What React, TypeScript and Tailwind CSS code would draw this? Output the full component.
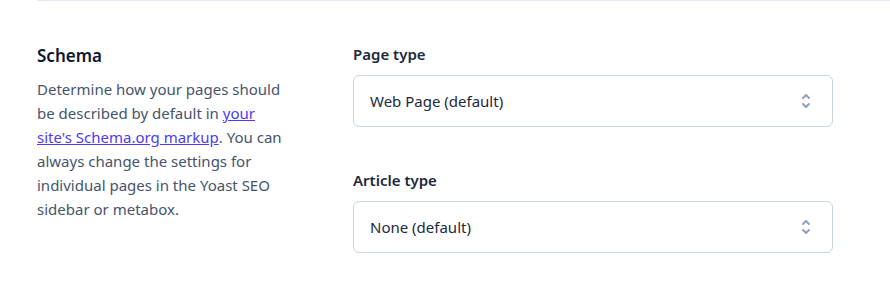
import React from "react";

function SelectorIcon() {
  return (
    <svg viewBox="0 0 20 20" fill="currentColor" className="h-5 w-5 text-slate-400" aria-hidden="true">
      <path
        fillRule="evenodd"
        d="M10 3a1 1 0 01.707.293l3 3a1 1 0 01-1.414 1.414L10 5.414 7.707 7.707a1 1 0 01-1.414-1.414l3-3A1 1 0 0110 3zm-3.707 9.293a1 1 0 011.414 0L10 14.586l2.293-2.293a1 1 0 011.414 1.414l-3 3a1 1 0 01-1.414 0l-3-3a1 1 0 010-1.414z"
        clipRule="evenodd"
      />
    </svg>
  );
}

function SelectField({ label, value, className = "" }: { label: string; value: string; className?: string }) {
  return (
    <div className={className}>
      <div className="text-[15px] font-semibold leading-5 text-slate-800">{label}</div>
      <button
        type="button"
        className="mt-[11px] flex h-[52px] w-[480px] items-center justify-between rounded-md border border-slate-300 bg-white pl-4 pr-4 text-left text-[15px] text-slate-800"
      >
        <span>{value}</span>
        <SelectorIcon />
      </button>
    </div>
  );
}

export default function App() {
  return (
    <div
      className="h-[293px] w-[890px] overflow-hidden bg-white pl-[37px]"
      style={{ fontFamily: '"Noto Sans", "Open Sans", sans-serif' }}
    >
      <div className="border-t border-slate-200 pt-[43px]">
        <div className="flex items-start">
          <div className="w-[252px]">
            <h2 className="text-[17px] font-semibold leading-6 text-slate-900">Schema</h2>
            <p className="mt-[9px] text-[15px] leading-6 text-slate-600">
              Determine how your pages should be described by default in{" "}
              <a href="#" className="text-indigo-600 underline">
                your site's Schema.org markup
              </a>
              . You can always change the settings for individual pages in the Yoast SEO sidebar or metabox.
            </p>
          </div>
          <div className="ml-[64px]">
            <SelectField label="Page type" value="Web Page (default)" />
            <SelectField className="mt-[43px]" label="Article type" value="None (default)" />
          </div>
        </div>
      </div>
    </div>
  );
}
